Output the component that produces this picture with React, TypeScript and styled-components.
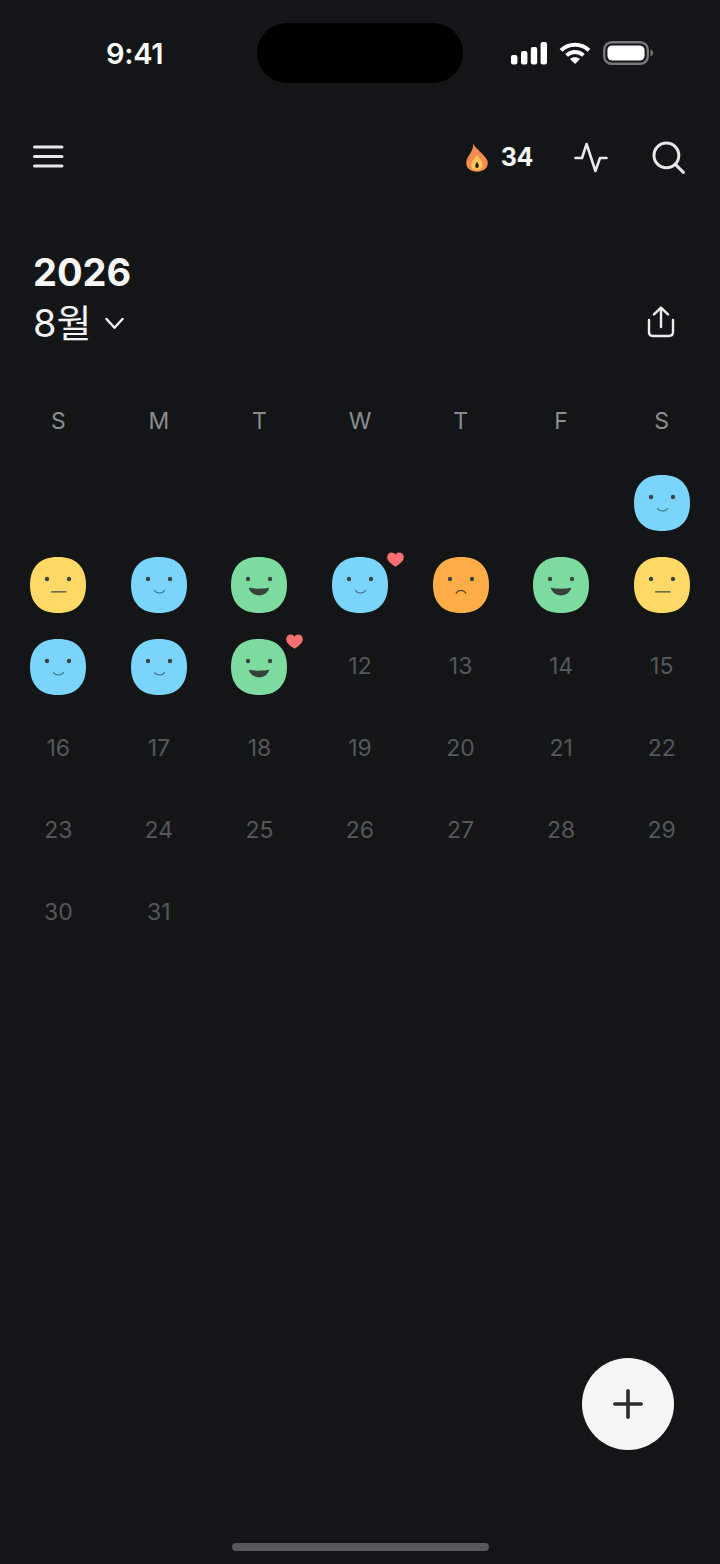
import React from "react";
import styled, { createGlobalStyle } from "styled-components";

const Global = createGlobalStyle`
  html, body { margin: 0; padding: 0; background: #131517; }
  body { font-family: Inter, "Noto Sans CJK KR", sans-serif; }
`;

const Screen = styled.div`
  position: relative;
  width: 720px;
  height: 1564px;
  background: #131517;
  color: #fff;
  overflow: hidden;
  display: flex;
  flex-direction: column;
`;

const StatusBar = styled.div`
  height: 106px;
  display: flex;
  align-items: center;
  justify-content: space-between;
  padding: 0 67px 0 106px;
  box-sizing: border-box;
`;

const Time = styled.span`
  font-family: Inter, sans-serif;
  font-size: 29px;
  font-weight: 600;
  letter-spacing: -0.3px;
  line-height: 1;
`;

const StatusIcons = styled.div`
  display: flex;
  align-items: center;
  gap: 12px;
`;

const Island = styled.div`
  position: absolute;
  left: 257px;
  top: 23px;
  width: 206px;
  height: 60px;
  border-radius: 30px;
  background: #000;
`;

const TopBar = styled.div`
  height: 102px;
  display: flex;
  align-items: center;
  justify-content: space-between;
  padding: 0 35px 0 32px;
  box-sizing: border-box;
`;

const TopActions = styled.div`
  display: flex;
  align-items: center;
`;

const Streak = styled.div`
  display: flex;
  align-items: center;
  gap: 13px;
  margin-right: 41px;
`;

const StreakCount = styled.span`
  font-size: 25px;
  font-weight: 700;
  letter-spacing: -0.4px;
  line-height: 1;
  color: #f5f5f5;
`;

const SearchWrap = styled.div`
  display: flex;
  margin-left: 44px;
`;

const Heading = styled.div`
  display: flex;
  align-items: flex-end;
  justify-content: space-between;
  padding: 41px 45px 0 33px;
`;

const Titles = styled.div`
  display: flex;
  flex-direction: column;
`;

const Year = styled.div`
  font-size: 38px;
  font-weight: 700;
  line-height: 46px;
  color: #f7f7f7;
`;

const MonthRow = styled.div`
  display: flex;
  align-items: center;
  gap: 14px;
  height: 56px;
`;

const Month = styled.span`
  font-family: Inter, "Noto Sans CJK KR", sans-serif;
  font-size: 38px;
  font-weight: 400;
  line-height: 1;
  color: #f2f2f2;
`;

const ShareWrap = styled.div`
  display: flex;
  padding-bottom: 13px;
`;

const Grid = styled.div`
  display: grid;
  grid-template-columns: repeat(7, 1fr);
  padding: 0 8px;
`;

const WeekRow = styled(Grid)`
  margin-top: 48px;
  height: 44px;
  align-items: center;
`;

const WeekLabel = styled.div`
  text-align: center;
  font-size: 23px;
  font-weight: 400;
  line-height: 1;
  color: #8b8d90;
`;

const DaysGrid = styled(Grid)`
  grid-auto-rows: 82px;
  margin-top: 18px;
`;

const Cell = styled.div`
  position: relative;
  display: flex;
  align-items: center;
  justify-content: center;
`;

const DayNumber = styled.span`
  font-size: 23px;
  line-height: 1;
  color: #55575b;
  margin-top: 1px;
`;

const FaceBox = styled.div`
  position: relative;
  width: 56px;
  height: 56px;
  margin-top: 1px;
`;

const HeartBadge = styled.svg`
  position: absolute;
  right: -16px;
  top: -5px;
  width: 17px;
  height: 15px;
`;

const Fab = styled.button`
  position: absolute;
  left: 582px;
  top: 1358px;
  width: 92px;
  height: 92px;
  border: 0;
  padding: 0;
  border-radius: 50%;
  background: #f5f5f5;
  display: flex;
  align-items: center;
  justify-content: center;
`;

const HomeBar = styled.div`
  position: absolute;
  left: 232px;
  top: 1543px;
  width: 257px;
  height: 8px;
  border-radius: 4px;
  background: #56585b;
`;

type Mood = "neutral" | "calm" | "happy" | "sad";

const moodColor: Record<Mood, string> = {
  neutral: "#FFD966",
  calm: "#7BD4FB",
  happy: "#7EDB9F",
  sad: "#FFAE47",
};

const Mouth = ({ mood }: { mood: Mood }) => {
  const ink = "#3f4a4f";
  if (mood === "neutral") return <path d="M21.5 34.8H36" stroke={ink} strokeWidth="1.2" strokeLinecap="round" fill="none" />;
  if (mood === "calm") return <path d="M23.5 33.6C26 36.8 31 36.8 33.5 33.6" stroke="#3f6f88" strokeWidth="1.2" strokeLinecap="round" fill="none" />;
  if (mood === "sad") return <path d="M23.2 36C25.5 32.4 30.5 32.4 32.8 36" stroke="#4a3a20" strokeWidth="1.2" strokeLinecap="round" fill="none" />;
  return <path d="M18.6 30.8C24 32 32 32 37.4 30.8C38 30.7 38.2 31.2 38 31.8C36.2 36 32.5 38.4 28 38.4C23.5 38.4 19.8 36 18 31.8C17.8 31.2 18 30.7 18.6 30.8Z" fill="#38403c" />;
};

const Face = ({ mood, heart }: { mood: Mood; heart?: boolean }) => (
  <FaceBox>
    <svg width="56" height="56" viewBox="0 0 56 56">
      <path
        d="M28 0C46 0 56 10 56 28C56 46 46 56 28 56C10 56 0 46 0 28C0 10 10 0 28 0Z"
        fill={moodColor[mood]}
      />
      <circle cx="17" cy="22" r="2.2" fill="#3d4548" />
      <circle cx="39" cy="22" r="2.2" fill="#3d4548" />
      <Mouth mood={mood} />
    </svg>
    {heart && (
      <HeartBadge viewBox="0 0 17 15">
        <path d="M8.5 14.8C3.6 11.4 0.2 9 0.2 5C0.2 2.2 2.2 0.4 4.6 0.4C6.2 0.4 7.7 1.2 8.5 2.7C9.3 1.2 10.8 0.4 12.4 0.4C14.8 0.4 16.8 2.2 16.8 5C16.8 9 13.4 11.4 8.5 14.8Z" fill="#FB6F72" />
      </HeartBadge>
    )}
  </FaceBox>
);

type Day = { n: number; mood?: Mood; heart?: boolean };

const moods: Day[] = [
  { n: 1, mood: "calm" },
  { n: 2, mood: "neutral" },
  { n: 3, mood: "calm" },
  { n: 4, mood: "happy" },
  { n: 5, mood: "calm", heart: true },
  { n: 6, mood: "sad" },
  { n: 7, mood: "happy" },
  { n: 8, mood: "neutral" },
  { n: 9, mood: "calm" },
  { n: 10, mood: "calm" },
  { n: 11, mood: "happy", heart: true },
];

const days: Day[] = Array.from({ length: 31 }, (_, i) => moods[i] ?? { n: i + 1 });
const week = ["S", "M", "T", "W", "T", "F", "S"];

const SignalIcon = () => (
  <svg width="36" height="23" viewBox="0 0 36 23" fill="#fff">
    <rect x="0" y="13" width="6.4" height="9.6" rx="2" />
    <rect x="10" y="9" width="6.4" height="13.6" rx="2" />
    <rect x="19.8" y="5" width="6.4" height="17.6" rx="2" />
    <rect x="29.6" y="0" width="6.4" height="22.6" rx="2" />
  </svg>
);

const WifiIcon = () => (
  <svg width="32" height="22" viewBox="0 0 32 22" fill="none" stroke="#fff" strokeWidth="4">
    <path d="M2 8.4C9.8 1 22.2 1 30 8.4" />
    <path d="M7.6 13.4C12.4 9 19.6 9 24.4 13.4" />
    <path d="M16 22L11 17C13.8 14.6 18.2 14.6 21 17L16 22Z" fill="#fff" stroke="none" />
  </svg>
);

const BatteryIcon = () => (
  <svg width="50" height="24" viewBox="0 0 50 24">
    <rect x="1.2" y="1.2" width="43.6" height="21.6" rx="7.5" fill="none" stroke="#77797c" strokeWidth="2.4" />
    <rect x="4.4" y="4.4" width="37.2" height="15.2" rx="5" fill="#fff" />
    <path d="M47.5 8.5C49 9 50 10.4 50 12C50 13.6 49 15 47.5 15.5Z" fill="#77797c" />
  </svg>
);

const MenuIcon = () => (
  <svg width="32" height="24" viewBox="0 0 32 24" stroke="#e8e8e8" strokeWidth="3" strokeLinecap="round">
    <path d="M2.5 2H30M2.5 11.5H30M2.5 21H30" />
  </svg>
);

const FlameIcon = () => (
  <svg width="22" height="29" viewBox="0 0 22 29">
    <path d="M7.2 0.3C8.6 4.4 12.4 6.6 16.4 11C19.8 14.6 21.8 16.8 21.8 20C21.8 25.2 17.4 28.7 11 28.7C4.6 28.7 0.2 25.2 0.2 20C0.2 16.6 1.8 14.2 3.6 11.4C5.8 8 7.6 4.6 7.2 0.3Z" fill="#F68D50" />
    <path d="M11 11.4C12 14.2 14 15.6 15.4 18C16.6 20 17 21.6 16.4 23.4C15.6 26 13.6 27.2 11 27.2C8.4 27.2 6.4 26 5.6 23.4C5 21.6 5.4 20 6.6 18C8 15.6 10 14.2 11 11.4Z" fill="#FFC65C" />
    <path d="M11 18.8C11.6 20.4 12.7 21.4 12.7 23C12.7 24.3 12 25 11 25C10 25 9.3 24.3 9.3 23C9.3 21.4 10.4 20.4 11 18.8Z" fill="#1c1a17" />
  </svg>
);

const PulseIcon = () => (
  <svg width="34" height="31" viewBox="0 0 34 31" fill="none" stroke="#e8e8e8" strokeWidth="2.6" strokeLinecap="round" strokeLinejoin="round">
    <path d="M1.5 16H8L12.6 2L21.4 29L26 16H32.5" />
  </svg>
);

const SearchIcon = () => (
  <svg width="33" height="33" viewBox="0 0 33 33" fill="none" stroke="#e8e8e8" strokeWidth="3" strokeLinecap="round">
    <circle cx="14.4" cy="14.4" r="12.4" />
    <path d="M23.6 23.6L31.4 31.4" />
  </svg>
);

const ChevronIcon = () => (
  <svg width="19" height="13" viewBox="0 0 19 13" fill="none" stroke="#f0f0f0" strokeWidth="2.4" strokeLinecap="round" strokeLinejoin="round">
    <path d="M1.5 2L9.5 10.8L17.5 2" />
  </svg>
);

const ShareIcon = () => (
  <svg width="28" height="32" viewBox="0 0 28 32" fill="none" stroke="#ececec" strokeWidth="2.4" strokeLinecap="round" strokeLinejoin="round">
    <path d="M14 21V2M7 8.4L14 1.6L21 8.4" />
    <path d="M2 14V26C2 28.6 3.6 30 6 30H22C24.4 30 26 28.6 26 26V14" />
  </svg>
);

const PlusIcon = () => (
  <svg width="30" height="30" viewBox="0 0 30 30" stroke="#2a2c2f" strokeWidth="3.6" strokeLinecap="round">
    <path d="M15 1.8V28.2M1.8 15H28.2" />
  </svg>
);

export default function App() {
  return (
    <Screen>
      <Global />
      <StatusBar>
        <Time>9:41</Time>
        <StatusIcons>
          <SignalIcon />
          <WifiIcon />
          <BatteryIcon />
        </StatusIcons>
      </StatusBar>
      <Island />

      <TopBar>
        <MenuIcon />
        <TopActions>
          <Streak>
            <FlameIcon />
            <StreakCount>34</StreakCount>
          </Streak>
          <PulseIcon />
          <SearchWrap>
            <SearchIcon />
          </SearchWrap>
        </TopActions>
      </TopBar>

      <Heading>
        <Titles>
          <Year>2026</Year>
          <MonthRow>
            <Month>8월</Month>
            <ChevronIcon />
          </MonthRow>
        </Titles>
        <ShareWrap>
          <ShareIcon />
        </ShareWrap>
      </Heading>

      <WeekRow>
        {week.map((d, i) => (
          <WeekLabel key={i}>{d}</WeekLabel>
        ))}
      </WeekRow>

      <DaysGrid>
        {Array.from({ length: 6 }, (_, i) => (
          <Cell key={`blank-${i}`} />
        ))}
        {days.map((d) => (
          <Cell key={d.n}>
            {d.mood ? <Face mood={d.mood} heart={d.heart} /> : <DayNumber>{d.n}</DayNumber>}
          </Cell>
        ))}
      </DaysGrid>

      <Fab aria-label="add">
        <PlusIcon />
      </Fab>
      <HomeBar />
    </Screen>
  );
}
